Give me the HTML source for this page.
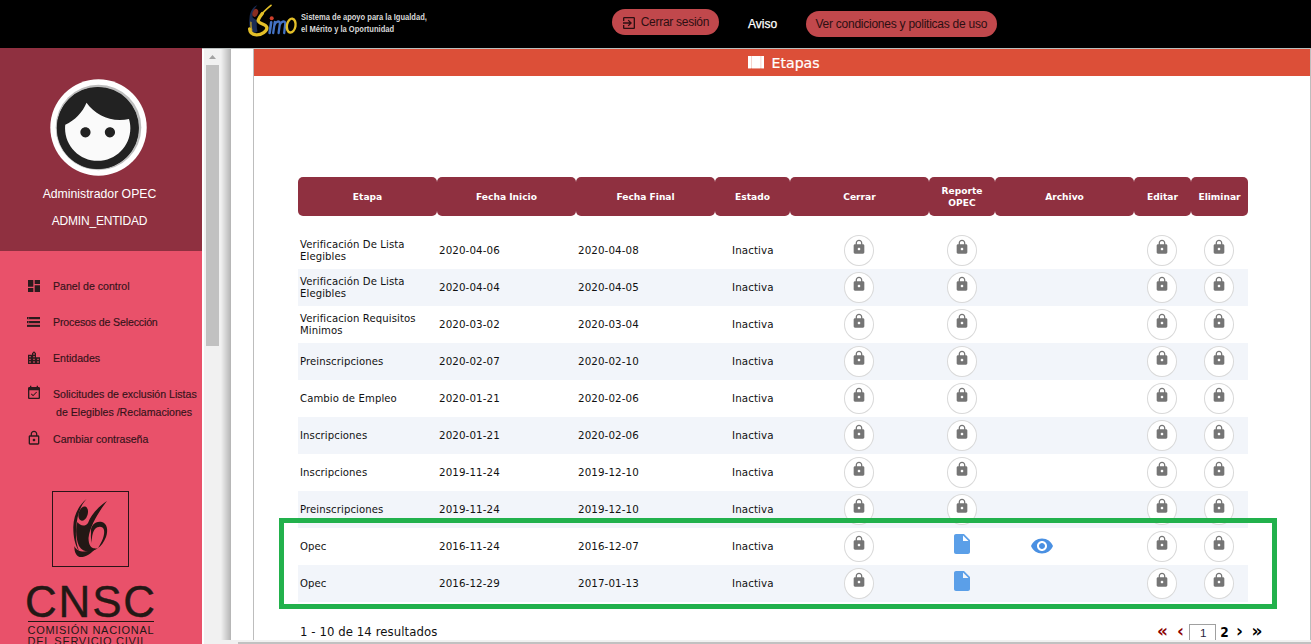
<!DOCTYPE html>
<html lang="es">
<head>
<meta charset="utf-8">
<title>SIMO - Etapas</title>
<style>
*{box-sizing:border-box;margin:0;padding:0}
html,body{width:1311px;height:644px;overflow:hidden;background:#fff}
body{position:relative;font-family:"DejaVu Sans","Liberation Sans",sans-serif;color:#111}
.abs{position:absolute}
/* top bar */
#top{left:0;top:0;width:1311px;height:48px;background:#000}
#topline{left:202px;top:48px;width:1109px;height:1px;background:#b9bebe}
.slogan{left:300.5px;top:12.1px;color:#d8d8d8;font-family:"Liberation Sans",sans-serif;font-weight:bold;font-size:8.8px;line-height:11.5px;white-space:nowrap;transform:scaleX(.858);transform-origin:0 0}
.pill{background:#c1484c;border-radius:13px;color:#2d0f12;font-family:"Liberation Sans",sans-serif;font-size:12px;white-space:nowrap}
#btn1{left:612px;top:9px;width:107px;height:26px}
#btn1 span{position:absolute;left:28.7px;top:6px;font-size:12px;letter-spacing:-.28px}
#btn2{left:806px;top:11px;width:191px;height:26px}
#btn2 span{position:absolute;left:9.5px;top:6px;font-size:12px;letter-spacing:-.25px}
#aviso{left:748px;top:17px;-webkit-text-stroke:.25px #fff;color:#fff;font-family:"Liberation Sans",sans-serif;font-size:12px}
/* sidebar */
#sbtop{left:0;top:48px;width:202px;height:203px;background:#8f3040}
#sbbot{left:0;top:251px;width:202px;height:393px;background:#e9516a}
.uname{left:0;width:199px;text-align:center;color:#fff;font-family:"Liberation Sans",sans-serif;white-space:nowrap}
.mi{left:53px;margin-top:-.4px;-webkit-text-stroke:.15px #3a1018;color:#33141a;font-family:"Liberation Sans",sans-serif;font-size:10.6px;white-space:nowrap}
/* scrollbars */
#vtrack{left:204px;top:49px;width:17px;height:591px;background:#f1f1f1}
#vthumb{left:206px;top:65px;width:13px;height:281px;background:#c1c1c1}
#vshadow{left:221px;top:49px;width:10px;height:591px;background:linear-gradient(to right,#f0f0f0,#b4b4b4)}
#htrack{z-index:5;left:204px;top:640px;width:1107px;height:4px;background:#f1f1f1}
#hthumb{z-index:6;left:238px;top:642px;width:1073px;height:2px;background:#c1c1c1}
/* content */
#panelL{left:253px;top:49px;width:1px;height:591px;background:#bdbdbd}
#panelR{left:1310px;top:49px;width:1px;height:591px;background:#bdbdbd}
#obar{left:254px;top:49px;width:1056px;height:27px;background:#dc4f38}
#title{left:771.5px;top:55px;color:#fff;font-size:14.15px;-webkit-text-stroke:.2px #fff;white-space:nowrap}
/* table */
.th{top:177px;height:39px;background:#8f3040;border-radius:5px;color:#fff;font-weight:bold;font-size:9.1px;display:flex;align-items:center;justify-content:center;text-align:center;line-height:12px;padding-top:1px}
.row{left:298px;width:950px;height:37px}
.row.alt{background:#f2f5fa}
.c{position:absolute;top:0px;height:37px;display:flex;align-items:center;font-size:10.3px;letter-spacing:.1px;line-height:12px;white-space:nowrap}
.c1{left:2px;font-size:10.1px}.c2{left:141px;top:-1px}.c3{left:280px;top:-1px}.c4{left:434px;top:-1px}
.lk{position:absolute;top:3px;width:30px;height:31px;border-radius:50%;border:1px solid #d9d9d9;background:#fff}
.lk svg{position:absolute;left:6.4px;top:3px;width:16px;height:16px;fill:#757575}
.k1{left:546px}.k2{left:649px}.k4{left:849px}.k5{left:906px}
.fi{position:absolute;left:652px;top:4px;width:24px;height:24px;fill:#5b9fe8}
.ey{position:absolute;left:732px;top:6px;width:24px;height:24px;fill:#4a90e2}
#green{left:279px;top:518px;width:998px;height:91px;border:5px solid #22b14c}
#res{left:300px;top:623.5px;font-family:'DejaVu Sans Condensed','DejaVu Sans',sans-serif;font-size:13px;letter-spacing:.08px;white-space:nowrap}
.pgc{top:620.8px;font-weight:bold;font-size:17px;line-height:20px;white-space:nowrap}
</style>
</head>
<body>
<!-- TOP BAR -->
<div id="top" class="abs"></div>
<div id="topline" class="abs"></div>
<svg class="abs" style="left:244px;top:0" width="60" height="48" viewBox="244 0 60 48">
  <path d="M257.3 5.2 C253.5 6.5 250.3 11 249.6 17 C249 22 249.3 27.500 250.5 31.500 C252 33.500 255.500 33 257.500 31.500 C256.600 28 256.500 24 257 20.500 C255.500 19.500 253.800 18.500 252.600 17.500 C252.500 12.500 254.300 8 257.300 5.200Z" fill="#1b2c54"/>
  <path d="M250.300 21.500 C250 25 250.500 28.500 251.300 31 L252.600 30.500 C251.800 28 251.500 25 251.600 22Z" fill="#b8982a"/>
  <ellipse cx="255.3" cy="12.9" rx="2.7" ry="4.1" transform="rotate(20 255.3 12.9)" fill="#8a2d20"/>
  <path d="M271 5.300 C267 8.500 263.500 11.800 261.300 14.800" fill="none" stroke="#e3bf28" stroke-width="1.700" stroke-linecap="round"/><path d="M262.300 13.500 C260.500 15.800 259 18 258.300 19.800 C256.800 23.800 265.500 23.200 266.800 27.200 C267.800 31 261 35.100 256.300 34.800 C252.300 34.500 249.800 32 249.600 28.800" fill="none" stroke="#e3bf28" stroke-width="3.300" stroke-linecap="round"/>
  <circle cx="271.7" cy="18.3" r="2" fill="#cf3f2b"/>
  <path d="M271.200 22.200 L269.600 33" stroke="#4472c4" stroke-width="2.600" stroke-linecap="round" fill="none"/>
  <path d="M274.800 21.800 L273.200 33 M274.400 25.500 C275.500 21.300 279.800 20 279.900 23.500 L278.600 33 M279.600 25.500 C280.700 21.300 285.200 20 285.300 23.500 L284.200 33" stroke="#4472c4" stroke-width="2.300" stroke-linecap="round" stroke-linejoin="round" fill="none"/>
  <ellipse cx="291.2" cy="25.6" rx="4.300" ry="7" transform="rotate(10 291.2 25.6)" fill="none" stroke="#e3bf28" stroke-width="2.400"/>
</svg>
<div class="abs slogan">Sistema de apoyo para la Igualdad,<br>el Mérito y la Oportunidad</div>
<div id="btn1" class="abs pill">
  <svg class="abs" style="left:9px;top:5.800px" width="16" height="16" viewBox="0 0 24 24" fill="#2d0f12"><path d="M10.09 15.590L11.5 17l5-5-5-5-1.410 1.410L12.670 11H3v2h9.670l-2.580 2.590zM19 3H5c-1.110 0-2 .9-2 2v4h2V5h14v14H5v-4H3v4c0 1.100.89 2 2 2h14c1.100 0 2-.9 2-2V5c0-1.100-.9-2-2-2z"/></svg>
  <span>Cerrar sesión</span>
</div>
<div id="aviso" class="abs">Aviso</div>
<div id="btn2" class="abs pill"><span>Ver condiciones y politicas de uso</span></div>

<!-- SIDEBAR -->
<div id="sbtop" class="abs"></div>
<div id="sbbot" class="abs"></div>
<svg class="abs" style="left:50px;top:79px" width="97" height="97" viewBox="-48.5 -48.5 97 97">
  <circle r="48.2" fill="#fff"/>
  <circle r="42.8" fill="#bdbdbd"/>
  <circle cx="-.6" cy=".5" r="41" fill="#222"/>
  <g transform="translate(-.8 .7) scale(4.08) translate(-12 -12)">
    <circle cx="12" cy="12" r="8.4" fill="#fafafa"/>
    <path fill="#222" d="M9 11.750c-.69 0-1.250.56-1.250 1.250s.56 1.250 1.250 1.250 1.250-.56 1.250-1.250-.56-1.250-1.250-1.250zm6 0c-.69 0-1.250.56-1.250 1.250s.56 1.250 1.250 1.250 1.250-.56 1.250-1.250-.56-1.250-1.250-1.250zM12 2C6.480 2 2 6.480 2 12s4.480 10 10 10 10-4.480 10-10S17.520 2 12 2zm0 18c-4.410 0-8-3.590-8-8 0-.29.020-.58.050-.86 2.360-1.050 4.230-2.980 5.210-5.370C11.070 8.330 14.050 10 17.420 10c.78 0 1.530-.09 2.250-.260.210.71.330 1.470.330 2.260 0 4.410-3.590 8-8 8z"/>
  </g>
</svg>
<div class="abs uname" style="top:186.5px;font-size:12.25px">Administrador OPEC</div>
<div class="abs uname" style="top:214px;font-size:12px;letter-spacing:-.2px">ADMIN_ENTIDAD</div>

<svg class="abs" style="left:25.500px;top:278px" width="16" height="16" viewBox="0 0 24 24" fill="#2a1a1c"><path d="M3 13h8V3H3v10zm0 8h8v-6H3v6zm10 0h8V11h-8v10zm0-18v6h8V3h-8z"/></svg>
<div class="abs mi" style="top:280px">Panel de control</div>
<svg class="abs" style="left:26.800px;top:317px" width="13.200" height="10" viewBox="0 0 13.2 10" fill="#2a1a1c"><rect x="0" y="0" width="13.200" height="2.200"/><rect x="0" y="4" width="13.200" height="2.200"/><rect x="0" y="7.800" width="13.200" height="2.100"/><circle cx="1.700" cy="1.100" r=".55" fill="#e9516a"/><circle cx="1.700" cy="5.100" r=".55" fill="#e9516a"/></svg>
<div class="abs mi" style="top:316px;letter-spacing:-.15px">Procesos de Selección</div>
<svg class="abs" style="left:25.500px;top:350px" width="16" height="16" viewBox="0 0 24 24" fill="#2a1a1c"><path d="M15 11V5l-3-3-3 3v2H3v14h18V11h-6zm-8 8H5v-2h2v2zm0-4H5v-2h2v2zm0-4H5V9h2v2zm6 8h-2v-2h2v2zm0-4h-2v-2h2v2zm0-4h-2V9h2v2zm0-4h-2V5h2v2zm6 12h-2v-2h2v2zm0-4h-2v-2h2v2z"/></svg>
<div class="abs mi" style="top:352px">Entidades</div>
<svg class="abs" style="left:25.500px;top:385px" width="16" height="16" viewBox="0 0 24 24" fill="#2a1a1c"><path d="M16.530 11.060L15.470 10l-4.880 4.880-2.120-2.120-1.060 1.060L10.590 17l5.940-5.940zM19 3h-1V1h-2v2H8V1H6v2H5c-1.110 0-1.990.9-1.990 2L3 19c0 1.100.89 2 2 2h14c1.100 0 2-.9 2-2V5c0-1.100-.9-2-2-2zm0 16H5V8h14v11z"/></svg>
<div class="abs mi" style="top:388px">Solicitudes de exclusión Listas</div>
<div class="abs mi" style="top:406px;left:56px">de Elegibles /Reclamaciones</div>
<svg class="abs" style="left:25.500px;top:430px" width="16" height="16" viewBox="0 0 24 24" fill="#2a1a1c"><path d="M12 17c1.100 0 2-.9 2-2s-.9-2-2-2-2 .9-2 2 .9 2 2 2zm6-9h-1V6c0-2.760-2.240-5-5-5S7 3.240 7 6v2H6c-1.100 0-2 .9-2 2v10c0 1.100.9 2 2 2h12c1.100 0 2-.9 2-2V10c0-1.100-.9-2-2-2zM8.900 6c0-1.710 1.390-3.100 3.100-3.100s3.100 1.390 3.100 3.100v2H8.900V6zM18 20H6V10h12v10z"/></svg>
<div class="abs mi" style="top:433px">Cambiar contraseña</div>

<!-- CNSC logo -->
<div class="abs" style="left:52px;top:491px;width:77px;height:76px;border:1px solid #2a1418"></div>
<svg class="abs" style="left:52px;top:491px" width="77" height="76" viewBox="52 491 77 76" fill="#231815">
  <ellipse cx="83.2" cy="513.6" rx="4.500" ry="7.300" transform="rotate(17 83.2 513.6)"/>
  <path d="M86.500 499 C79 505 73.500 515 73.300 527 C73.200 537 75 545 79 551 C76 543 75.500 536 76.200 528 C77 516 80 506 86.500 499Z"/>
  <path d="M107 501 C98 507 91 515 88 523 C85 527 80 526 77.500 522 C75.500 528 75.500 538 79 546 C83 553 92 553 98 548 C92 550 88.500 546 88.500 538 C90 525 100 510 107 501Z"/>
  <path d="M74.500 546 C76 552 86 553.500 95 548.500 C91 555 82 558.500 78.500 556.500 C75.500 555 74 550 74.500 546Z"/>
  <path d="M91 533 C90 525 96 520.500 102 522 C107 523.500 108.500 530 106 537 C104 542 101 546 98 548 C102 542 105 535 104 530 C103 526 98 526 95 529 C92.500 532 91.500 538 92 543 C91 540 90.700 536 91 533Z"/>
</svg>
<div class="abs" style="left:25px;top:577px;font-family:'Liberation Sans',sans-serif;font-size:44px;letter-spacing:1.8px;color:#231815;white-space:nowrap;line-height:50px;-webkit-text-stroke:.4px #231815">CNSC</div>
<div class="abs" style="left:28px;top:621px;width:126px;height:1px;background:#231815"></div>
<div class="abs" style="left:27.500px;top:624.5px;font-family:'Liberation Sans',sans-serif;font-size:11px;color:#231815;white-space:nowrap;line-height:11.6px;letter-spacing:.7px">COMISIÓN NACIONAL<br>DEL SERVICIO CIVIL</div>

<!-- SCROLLBARS -->
<div id="vtrack" class="abs"></div>
<div id="vthumb" class="abs"></div>
<svg class="abs" style="left:209px;top:55px" width="7" height="4" viewBox="0 0 7 4"><path d="M0 4L3.500 0 7 4z" fill="#a3a3a3"/></svg>
<div id="vshadow" class="abs"></div>
<div id="htrack" class="abs"></div>
<div id="hthumb" class="abs"></div>

<!-- CONTENT PANEL -->
<div id="panelL" class="abs"></div>
<div id="panelR" class="abs"></div>
<div id="obar" class="abs"></div>
<svg class="abs" style="left:748px;top:56.3px" width="16.4" height="12.3" viewBox="0 0 16.4 12.3" fill="#fff"><rect x="0" y="0" width="16.4" height="12.3" fill="#f3c9c1"/><rect x="0" y="0" width="3" height="12.3"/><rect x="3.8" y="0" width="8.7" height="12.3"/><rect x="13.300" y="0" width="3.100" height="12.3"/></svg>
<div id="title" class="abs">Etapas</div>

<!-- TABLE HEADER -->
<div class="abs th" style="left:298px;width:139px">Etapa</div>
<div class="abs th" style="left:437px;width:139px">Fecha Inicio</div>
<div class="abs th" style="left:576px;width:139px">Fecha Final</div>
<div class="abs th" style="left:715px;width:75px">Estado</div>
<div class="abs th" style="left:790px;width:139px">Cerrar</div>
<div class="abs th" style="left:929px;width:66px">Reporte<br>OPEC</div>
<div class="abs th" style="left:995px;width:139px">Archivo</div>
<div class="abs th" style="left:1134px;width:57px">Editar</div>
<div class="abs th" style="left:1191px;width:57px">Eliminar</div>

<!-- ROWS -->
<div id="rows">
<div class="row abs" style="top:232px"><div class="c c1">Verificación De Lista<br>Elegibles</div><div class="c c2">2020-04-06</div><div class="c c3">2020-04-08</div><div class="c c4">Inactiva</div><div class="lk k1"><svg viewBox="0 0 24 24"><path d="M18 8h-1V6c0-2.760-2.240-5-5-5S7 3.240 7 6v2H6c-1.100 0-2 .9-2 2v10c0 1.100.9 2 2 2h12c1.100 0 2-.9 2-2V10c0-1.100-.9-2-2-2zm-6 9c-1.100 0-2-.9-2-2s.9-2 2-2 2 .9 2 2-.9 2-2 2zm3.100-9H8.900V6c0-1.710 1.390-3.100 3.100-3.100 1.710 0 3.100 1.390 3.100 3.100v2z"/></svg></div><div class="lk k2"><svg viewBox="0 0 24 24"><path d="M18 8h-1V6c0-2.760-2.240-5-5-5S7 3.240 7 6v2H6c-1.100 0-2 .9-2 2v10c0 1.100.9 2 2 2h12c1.100 0 2-.9 2-2V10c0-1.100-.9-2-2-2zm-6 9c-1.100 0-2-.9-2-2s.9-2 2-2 2 .9 2 2-.9 2-2 2zm3.100-9H8.900V6c0-1.710 1.390-3.100 3.100-3.100 1.710 0 3.100 1.390 3.100 3.100v2z"/></svg></div><div class="lk k4"><svg viewBox="0 0 24 24"><path d="M18 8h-1V6c0-2.760-2.240-5-5-5S7 3.240 7 6v2H6c-1.100 0-2 .9-2 2v10c0 1.100.9 2 2 2h12c1.100 0 2-.9 2-2V10c0-1.100-.9-2-2-2zm-6 9c-1.100 0-2-.9-2-2s.9-2 2-2 2 .9 2 2-.9 2-2 2zm3.100-9H8.900V6c0-1.710 1.390-3.100 3.100-3.100 1.710 0 3.100 1.390 3.100 3.100v2z"/></svg></div><div class="lk k5"><svg viewBox="0 0 24 24"><path d="M18 8h-1V6c0-2.760-2.240-5-5-5S7 3.240 7 6v2H6c-1.100 0-2 .9-2 2v10c0 1.100.9 2 2 2h12c1.100 0 2-.9 2-2V10c0-1.100-.9-2-2-2zm-6 9c-1.100 0-2-.9-2-2s.9-2 2-2 2 .9 2 2-.9 2-2 2zm3.100-9H8.900V6c0-1.710 1.390-3.100 3.100-3.100 1.710 0 3.100 1.390 3.100 3.100v2z"/></svg></div></div>
<div class="row abs alt" style="top:269px"><div class="c c1">Verificación De Lista<br>Elegibles</div><div class="c c2">2020-04-04</div><div class="c c3">2020-04-05</div><div class="c c4">Inactiva</div><div class="lk k1"><svg viewBox="0 0 24 24"><path d="M18 8h-1V6c0-2.760-2.240-5-5-5S7 3.240 7 6v2H6c-1.100 0-2 .9-2 2v10c0 1.100.9 2 2 2h12c1.100 0 2-.9 2-2V10c0-1.100-.9-2-2-2zm-6 9c-1.100 0-2-.9-2-2s.9-2 2-2 2 .9 2 2-.9 2-2 2zm3.100-9H8.900V6c0-1.710 1.390-3.100 3.100-3.100 1.710 0 3.100 1.390 3.100 3.100v2z"/></svg></div><div class="lk k2"><svg viewBox="0 0 24 24"><path d="M18 8h-1V6c0-2.760-2.240-5-5-5S7 3.240 7 6v2H6c-1.100 0-2 .9-2 2v10c0 1.100.9 2 2 2h12c1.100 0 2-.9 2-2V10c0-1.100-.9-2-2-2zm-6 9c-1.100 0-2-.9-2-2s.9-2 2-2 2 .9 2 2-.9 2-2 2zm3.100-9H8.900V6c0-1.710 1.390-3.100 3.100-3.100 1.710 0 3.100 1.390 3.100 3.100v2z"/></svg></div><div class="lk k4"><svg viewBox="0 0 24 24"><path d="M18 8h-1V6c0-2.760-2.240-5-5-5S7 3.240 7 6v2H6c-1.100 0-2 .9-2 2v10c0 1.100.9 2 2 2h12c1.100 0 2-.9 2-2V10c0-1.100-.9-2-2-2zm-6 9c-1.100 0-2-.9-2-2s.9-2 2-2 2 .9 2 2-.9 2-2 2zm3.100-9H8.900V6c0-1.710 1.390-3.100 3.100-3.100 1.710 0 3.100 1.390 3.100 3.100v2z"/></svg></div><div class="lk k5"><svg viewBox="0 0 24 24"><path d="M18 8h-1V6c0-2.760-2.240-5-5-5S7 3.240 7 6v2H6c-1.100 0-2 .9-2 2v10c0 1.100.9 2 2 2h12c1.100 0 2-.9 2-2V10c0-1.100-.9-2-2-2zm-6 9c-1.100 0-2-.9-2-2s.9-2 2-2 2 .9 2 2-.9 2-2 2zm3.100-9H8.900V6c0-1.710 1.390-3.100 3.100-3.100 1.710 0 3.100 1.390 3.100 3.100v2z"/></svg></div></div>
<div class="row abs" style="top:306px"><div class="c c1">Verificacion Requisitos<br>Minimos</div><div class="c c2">2020-03-02</div><div class="c c3">2020-03-04</div><div class="c c4">Inactiva</div><div class="lk k1"><svg viewBox="0 0 24 24"><path d="M18 8h-1V6c0-2.760-2.240-5-5-5S7 3.240 7 6v2H6c-1.100 0-2 .9-2 2v10c0 1.100.9 2 2 2h12c1.100 0 2-.9 2-2V10c0-1.100-.9-2-2-2zm-6 9c-1.100 0-2-.9-2-2s.9-2 2-2 2 .9 2 2-.9 2-2 2zm3.100-9H8.900V6c0-1.710 1.390-3.100 3.100-3.100 1.710 0 3.100 1.390 3.100 3.100v2z"/></svg></div><div class="lk k2"><svg viewBox="0 0 24 24"><path d="M18 8h-1V6c0-2.760-2.240-5-5-5S7 3.240 7 6v2H6c-1.100 0-2 .9-2 2v10c0 1.100.9 2 2 2h12c1.100 0 2-.9 2-2V10c0-1.100-.9-2-2-2zm-6 9c-1.100 0-2-.9-2-2s.9-2 2-2 2 .9 2 2-.9 2-2 2zm3.100-9H8.900V6c0-1.710 1.390-3.100 3.100-3.100 1.710 0 3.100 1.390 3.100 3.100v2z"/></svg></div><div class="lk k4"><svg viewBox="0 0 24 24"><path d="M18 8h-1V6c0-2.760-2.240-5-5-5S7 3.240 7 6v2H6c-1.100 0-2 .9-2 2v10c0 1.100.9 2 2 2h12c1.100 0 2-.9 2-2V10c0-1.100-.9-2-2-2zm-6 9c-1.100 0-2-.9-2-2s.9-2 2-2 2 .9 2 2-.9 2-2 2zm3.100-9H8.900V6c0-1.710 1.390-3.100 3.100-3.100 1.710 0 3.100 1.390 3.100 3.100v2z"/></svg></div><div class="lk k5"><svg viewBox="0 0 24 24"><path d="M18 8h-1V6c0-2.760-2.240-5-5-5S7 3.240 7 6v2H6c-1.100 0-2 .9-2 2v10c0 1.100.9 2 2 2h12c1.100 0 2-.9 2-2V10c0-1.100-.9-2-2-2zm-6 9c-1.100 0-2-.9-2-2s.9-2 2-2 2 .9 2 2-.9 2-2 2zm3.100-9H8.900V6c0-1.710 1.390-3.100 3.100-3.100 1.710 0 3.100 1.390 3.100 3.100v2z"/></svg></div></div>
<div class="row abs alt" style="top:343px"><div class="c c1">Preinscripciones</div><div class="c c2">2020-02-07</div><div class="c c3">2020-02-10</div><div class="c c4">Inactiva</div><div class="lk k1"><svg viewBox="0 0 24 24"><path d="M18 8h-1V6c0-2.760-2.240-5-5-5S7 3.240 7 6v2H6c-1.100 0-2 .9-2 2v10c0 1.100.9 2 2 2h12c1.100 0 2-.9 2-2V10c0-1.100-.9-2-2-2zm-6 9c-1.100 0-2-.9-2-2s.9-2 2-2 2 .9 2 2-.9 2-2 2zm3.100-9H8.900V6c0-1.710 1.390-3.100 3.100-3.100 1.710 0 3.100 1.390 3.100 3.100v2z"/></svg></div><div class="lk k2"><svg viewBox="0 0 24 24"><path d="M18 8h-1V6c0-2.760-2.240-5-5-5S7 3.240 7 6v2H6c-1.100 0-2 .9-2 2v10c0 1.100.9 2 2 2h12c1.100 0 2-.9 2-2V10c0-1.100-.9-2-2-2zm-6 9c-1.100 0-2-.9-2-2s.9-2 2-2 2 .9 2 2-.9 2-2 2zm3.100-9H8.900V6c0-1.710 1.390-3.100 3.100-3.100 1.710 0 3.100 1.390 3.100 3.100v2z"/></svg></div><div class="lk k4"><svg viewBox="0 0 24 24"><path d="M18 8h-1V6c0-2.760-2.240-5-5-5S7 3.240 7 6v2H6c-1.100 0-2 .9-2 2v10c0 1.100.9 2 2 2h12c1.100 0 2-.9 2-2V10c0-1.100-.9-2-2-2zm-6 9c-1.100 0-2-.9-2-2s.9-2 2-2 2 .9 2 2-.9 2-2 2zm3.100-9H8.900V6c0-1.710 1.390-3.100 3.100-3.100 1.710 0 3.100 1.390 3.100 3.100v2z"/></svg></div><div class="lk k5"><svg viewBox="0 0 24 24"><path d="M18 8h-1V6c0-2.760-2.240-5-5-5S7 3.240 7 6v2H6c-1.100 0-2 .9-2 2v10c0 1.100.9 2 2 2h12c1.100 0 2-.9 2-2V10c0-1.100-.9-2-2-2zm-6 9c-1.100 0-2-.9-2-2s.9-2 2-2 2 .9 2 2-.9 2-2 2zm3.100-9H8.900V6c0-1.710 1.390-3.100 3.100-3.100 1.710 0 3.100 1.390 3.100 3.100v2z"/></svg></div></div>
<div class="row abs" style="top:380px"><div class="c c1">Cambio de Empleo</div><div class="c c2">2020-01-21</div><div class="c c3">2020-02-06</div><div class="c c4">Inactiva</div><div class="lk k1"><svg viewBox="0 0 24 24"><path d="M18 8h-1V6c0-2.760-2.240-5-5-5S7 3.240 7 6v2H6c-1.100 0-2 .9-2 2v10c0 1.100.9 2 2 2h12c1.100 0 2-.9 2-2V10c0-1.100-.9-2-2-2zm-6 9c-1.100 0-2-.9-2-2s.9-2 2-2 2 .9 2 2-.9 2-2 2zm3.100-9H8.900V6c0-1.710 1.390-3.100 3.100-3.100 1.710 0 3.100 1.390 3.100 3.100v2z"/></svg></div><div class="lk k2"><svg viewBox="0 0 24 24"><path d="M18 8h-1V6c0-2.760-2.240-5-5-5S7 3.240 7 6v2H6c-1.100 0-2 .9-2 2v10c0 1.100.9 2 2 2h12c1.100 0 2-.9 2-2V10c0-1.100-.9-2-2-2zm-6 9c-1.100 0-2-.9-2-2s.9-2 2-2 2 .9 2 2-.9 2-2 2zm3.100-9H8.900V6c0-1.710 1.390-3.100 3.100-3.100 1.710 0 3.100 1.390 3.100 3.100v2z"/></svg></div><div class="lk k4"><svg viewBox="0 0 24 24"><path d="M18 8h-1V6c0-2.760-2.240-5-5-5S7 3.240 7 6v2H6c-1.100 0-2 .9-2 2v10c0 1.100.9 2 2 2h12c1.100 0 2-.9 2-2V10c0-1.100-.9-2-2-2zm-6 9c-1.100 0-2-.9-2-2s.9-2 2-2 2 .9 2 2-.9 2-2 2zm3.100-9H8.900V6c0-1.710 1.390-3.100 3.100-3.100 1.710 0 3.100 1.390 3.100 3.100v2z"/></svg></div><div class="lk k5"><svg viewBox="0 0 24 24"><path d="M18 8h-1V6c0-2.760-2.240-5-5-5S7 3.240 7 6v2H6c-1.100 0-2 .9-2 2v10c0 1.100.9 2 2 2h12c1.100 0 2-.9 2-2V10c0-1.100-.9-2-2-2zm-6 9c-1.100 0-2-.9-2-2s.9-2 2-2 2 .9 2 2-.9 2-2 2zm3.100-9H8.900V6c0-1.710 1.390-3.100 3.100-3.100 1.710 0 3.100 1.390 3.100 3.100v2z"/></svg></div></div>
<div class="row abs alt" style="top:417px"><div class="c c1">Inscripciones</div><div class="c c2">2020-01-21</div><div class="c c3">2020-02-06</div><div class="c c4">Inactiva</div><div class="lk k1"><svg viewBox="0 0 24 24"><path d="M18 8h-1V6c0-2.760-2.240-5-5-5S7 3.240 7 6v2H6c-1.100 0-2 .9-2 2v10c0 1.100.9 2 2 2h12c1.100 0 2-.9 2-2V10c0-1.100-.9-2-2-2zm-6 9c-1.100 0-2-.9-2-2s.9-2 2-2 2 .9 2 2-.9 2-2 2zm3.100-9H8.900V6c0-1.710 1.390-3.100 3.100-3.100 1.710 0 3.100 1.390 3.100 3.100v2z"/></svg></div><div class="lk k2"><svg viewBox="0 0 24 24"><path d="M18 8h-1V6c0-2.760-2.240-5-5-5S7 3.240 7 6v2H6c-1.100 0-2 .9-2 2v10c0 1.100.9 2 2 2h12c1.100 0 2-.9 2-2V10c0-1.100-.9-2-2-2zm-6 9c-1.100 0-2-.9-2-2s.9-2 2-2 2 .9 2 2-.9 2-2 2zm3.100-9H8.900V6c0-1.710 1.390-3.100 3.100-3.100 1.710 0 3.100 1.390 3.100 3.100v2z"/></svg></div><div class="lk k4"><svg viewBox="0 0 24 24"><path d="M18 8h-1V6c0-2.760-2.240-5-5-5S7 3.240 7 6v2H6c-1.100 0-2 .9-2 2v10c0 1.100.9 2 2 2h12c1.100 0 2-.9 2-2V10c0-1.100-.9-2-2-2zm-6 9c-1.100 0-2-.9-2-2s.9-2 2-2 2 .9 2 2-.9 2-2 2zm3.100-9H8.900V6c0-1.710 1.390-3.100 3.100-3.100 1.710 0 3.100 1.390 3.100 3.100v2z"/></svg></div><div class="lk k5"><svg viewBox="0 0 24 24"><path d="M18 8h-1V6c0-2.760-2.240-5-5-5S7 3.240 7 6v2H6c-1.100 0-2 .9-2 2v10c0 1.100.9 2 2 2h12c1.100 0 2-.9 2-2V10c0-1.100-.9-2-2-2zm-6 9c-1.100 0-2-.9-2-2s.9-2 2-2 2 .9 2 2-.9 2-2 2zm3.100-9H8.900V6c0-1.710 1.390-3.100 3.100-3.100 1.710 0 3.100 1.390 3.100 3.100v2z"/></svg></div></div>
<div class="row abs" style="top:454px"><div class="c c1">Inscripciones</div><div class="c c2">2019-11-24</div><div class="c c3">2019-12-10</div><div class="c c4">Inactiva</div><div class="lk k1"><svg viewBox="0 0 24 24"><path d="M18 8h-1V6c0-2.760-2.240-5-5-5S7 3.240 7 6v2H6c-1.100 0-2 .9-2 2v10c0 1.100.9 2 2 2h12c1.100 0 2-.9 2-2V10c0-1.100-.9-2-2-2zm-6 9c-1.100 0-2-.9-2-2s.9-2 2-2 2 .9 2 2-.9 2-2 2zm3.100-9H8.900V6c0-1.710 1.390-3.100 3.100-3.100 1.710 0 3.100 1.390 3.100 3.100v2z"/></svg></div><div class="lk k2"><svg viewBox="0 0 24 24"><path d="M18 8h-1V6c0-2.760-2.240-5-5-5S7 3.240 7 6v2H6c-1.100 0-2 .9-2 2v10c0 1.100.9 2 2 2h12c1.100 0 2-.9 2-2V10c0-1.100-.9-2-2-2zm-6 9c-1.100 0-2-.9-2-2s.9-2 2-2 2 .9 2 2-.9 2-2 2zm3.100-9H8.900V6c0-1.710 1.390-3.100 3.100-3.100 1.710 0 3.100 1.390 3.100 3.100v2z"/></svg></div><div class="lk k4"><svg viewBox="0 0 24 24"><path d="M18 8h-1V6c0-2.760-2.240-5-5-5S7 3.240 7 6v2H6c-1.100 0-2 .9-2 2v10c0 1.100.9 2 2 2h12c1.100 0 2-.9 2-2V10c0-1.100-.9-2-2-2zm-6 9c-1.100 0-2-.9-2-2s.9-2 2-2 2 .9 2 2-.9 2-2 2zm3.100-9H8.900V6c0-1.710 1.390-3.100 3.100-3.100 1.710 0 3.100 1.390 3.100 3.100v2z"/></svg></div><div class="lk k5"><svg viewBox="0 0 24 24"><path d="M18 8h-1V6c0-2.760-2.240-5-5-5S7 3.240 7 6v2H6c-1.100 0-2 .9-2 2v10c0 1.100.9 2 2 2h12c1.100 0 2-.9 2-2V10c0-1.100-.9-2-2-2zm-6 9c-1.100 0-2-.9-2-2s.9-2 2-2 2 .9 2 2-.9 2-2 2zm3.100-9H8.900V6c0-1.710 1.390-3.100 3.100-3.100 1.710 0 3.100 1.390 3.100 3.100v2z"/></svg></div></div>
<div class="row abs alt" style="top:491px"><div class="c c1">Preinscripciones</div><div class="c c2">2019-11-24</div><div class="c c3">2019-12-10</div><div class="c c4">Inactiva</div><div class="lk k1"><svg viewBox="0 0 24 24"><path d="M18 8h-1V6c0-2.760-2.240-5-5-5S7 3.240 7 6v2H6c-1.100 0-2 .9-2 2v10c0 1.100.9 2 2 2h12c1.100 0 2-.9 2-2V10c0-1.100-.9-2-2-2zm-6 9c-1.100 0-2-.9-2-2s.9-2 2-2 2 .9 2 2-.9 2-2 2zm3.100-9H8.900V6c0-1.710 1.390-3.100 3.100-3.100 1.710 0 3.100 1.390 3.100 3.100v2z"/></svg></div><div class="lk k2"><svg viewBox="0 0 24 24"><path d="M18 8h-1V6c0-2.760-2.240-5-5-5S7 3.240 7 6v2H6c-1.100 0-2 .9-2 2v10c0 1.100.9 2 2 2h12c1.100 0 2-.9 2-2V10c0-1.100-.9-2-2-2zm-6 9c-1.100 0-2-.9-2-2s.9-2 2-2 2 .9 2 2-.9 2-2 2zm3.100-9H8.900V6c0-1.710 1.390-3.100 3.100-3.100 1.710 0 3.100 1.390 3.100 3.100v2z"/></svg></div><div class="lk k4"><svg viewBox="0 0 24 24"><path d="M18 8h-1V6c0-2.760-2.240-5-5-5S7 3.240 7 6v2H6c-1.100 0-2 .9-2 2v10c0 1.100.9 2 2 2h12c1.100 0 2-.9 2-2V10c0-1.100-.9-2-2-2zm-6 9c-1.100 0-2-.9-2-2s.9-2 2-2 2 .9 2 2-.9 2-2 2zm3.100-9H8.900V6c0-1.710 1.390-3.100 3.100-3.100 1.710 0 3.100 1.390 3.100 3.100v2z"/></svg></div><div class="lk k5"><svg viewBox="0 0 24 24"><path d="M18 8h-1V6c0-2.760-2.240-5-5-5S7 3.240 7 6v2H6c-1.100 0-2 .9-2 2v10c0 1.100.9 2 2 2h12c1.100 0 2-.9 2-2V10c0-1.100-.9-2-2-2zm-6 9c-1.100 0-2-.9-2-2s.9-2 2-2 2 .9 2 2-.9 2-2 2zm3.100-9H8.900V6c0-1.710 1.390-3.100 3.100-3.100 1.710 0 3.100 1.390 3.100 3.100v2z"/></svg></div></div>
<div class="row abs" style="top:528px"><div class="c c1">Opec</div><div class="c c2">2016-11-24</div><div class="c c3">2016-12-07</div><div class="c c4">Inactiva</div><div class="lk k1"><svg viewBox="0 0 24 24"><path d="M18 8h-1V6c0-2.760-2.240-5-5-5S7 3.240 7 6v2H6c-1.100 0-2 .9-2 2v10c0 1.100.9 2 2 2h12c1.100 0 2-.9 2-2V10c0-1.100-.9-2-2-2zm-6 9c-1.100 0-2-.9-2-2s.9-2 2-2 2 .9 2 2-.9 2-2 2zm3.100-9H8.900V6c0-1.710 1.390-3.100 3.100-3.100 1.710 0 3.100 1.390 3.100 3.100v2z"/></svg></div><svg class="fi" viewBox="0 0 24 24"><path d="M6 2c-1.100 0-1.990.9-1.990 2L4 20c0 1.100.89 2 1.990 2H18c1.100 0 2-.9 2-2V8l-6-6H6zm7 7V3.500L18.500 9H13z"/></svg><svg class="ey" viewBox="0 0 24 24"><path d="M12 4.500C7 4.500 2.730 7.610 1 12c1.730 4.390 6 7.500 11 7.500s9.270-3.110 11-7.500c-1.730-4.390-6-7.500-11-7.500zM12 17c-2.760 0-5-2.240-5-5s2.240-5 5-5 5 2.240 5 5-2.240 5-5 5zm0-8c-1.660 0-3 1.340-3 3s1.340 3 3 3 3-1.340 3-3-1.340-3-3-3z"/></svg><div class="lk k4"><svg viewBox="0 0 24 24"><path d="M18 8h-1V6c0-2.760-2.240-5-5-5S7 3.240 7 6v2H6c-1.100 0-2 .9-2 2v10c0 1.100.9 2 2 2h12c1.100 0 2-.9 2-2V10c0-1.100-.9-2-2-2zm-6 9c-1.100 0-2-.9-2-2s.9-2 2-2 2 .9 2 2-.9 2-2 2zm3.100-9H8.900V6c0-1.710 1.390-3.100 3.100-3.100 1.710 0 3.100 1.390 3.100 3.100v2z"/></svg></div><div class="lk k5"><svg viewBox="0 0 24 24"><path d="M18 8h-1V6c0-2.760-2.240-5-5-5S7 3.240 7 6v2H6c-1.100 0-2 .9-2 2v10c0 1.100.9 2 2 2h12c1.100 0 2-.9 2-2V10c0-1.100-.9-2-2-2zm-6 9c-1.100 0-2-.9-2-2s.9-2 2-2 2 .9 2 2-.9 2-2 2zm3.100-9H8.900V6c0-1.710 1.390-3.100 3.100-3.100 1.710 0 3.100 1.390 3.100 3.100v2z"/></svg></div></div>
<div class="row abs alt" style="top:565px"><div class="c c1">Opec</div><div class="c c2">2016-12-29</div><div class="c c3">2017-01-13</div><div class="c c4">Inactiva</div><div class="lk k1"><svg viewBox="0 0 24 24"><path d="M18 8h-1V6c0-2.760-2.240-5-5-5S7 3.240 7 6v2H6c-1.100 0-2 .9-2 2v10c0 1.100.9 2 2 2h12c1.100 0 2-.9 2-2V10c0-1.100-.9-2-2-2zm-6 9c-1.100 0-2-.9-2-2s.9-2 2-2 2 .9 2 2-.9 2-2 2zm3.100-9H8.900V6c0-1.710 1.390-3.100 3.100-3.100 1.710 0 3.100 1.390 3.100 3.100v2z"/></svg></div><svg class="fi" viewBox="0 0 24 24"><path d="M6 2c-1.100 0-1.990.9-1.990 2L4 20c0 1.100.89 2 1.990 2H18c1.100 0 2-.9 2-2V8l-6-6H6zm7 7V3.500L18.500 9H13z"/></svg><div class="lk k4"><svg viewBox="0 0 24 24"><path d="M18 8h-1V6c0-2.760-2.240-5-5-5S7 3.240 7 6v2H6c-1.100 0-2 .9-2 2v10c0 1.100.9 2 2 2h12c1.100 0 2-.9 2-2V10c0-1.100-.9-2-2-2zm-6 9c-1.100 0-2-.9-2-2s.9-2 2-2 2 .9 2 2-.9 2-2 2zm3.100-9H8.900V6c0-1.710 1.390-3.100 3.100-3.100 1.710 0 3.100 1.390 3.100 3.100v2z"/></svg></div><div class="lk k5"><svg viewBox="0 0 24 24"><path d="M18 8h-1V6c0-2.760-2.240-5-5-5S7 3.240 7 6v2H6c-1.100 0-2 .9-2 2v10c0 1.100.9 2 2 2h12c1.100 0 2-.9 2-2V10c0-1.100-.9-2-2-2zm-6 9c-1.100 0-2-.9-2-2s.9-2 2-2 2 .9 2 2-.9 2-2 2zm3.100-9H8.900V6c0-1.710 1.390-3.100 3.100-3.100 1.710 0 3.100 1.390 3.100 3.100v2z"/></svg></div></div>
</div>

<div id="green" class="abs"></div>
<div id="res" class="abs">1 - 10 de 14 resultados</div>
<div class="abs pgc" style="left:1157px;color:#8b0000">«</div>
<div class="abs pgc" style="left:1177px;color:#8b0000">‹</div>
<div class="abs" style="left:1189px;top:624px;width:27px;height:20px;border:1px solid #a0a0a0;background:#fff"></div>
<div class="abs" style="left:1199.5px;top:626px;font-family:'Liberation Sans',sans-serif;font-size:23.4px;line-height:26px;transform:scale(.5);transform-origin:0 0;color:#2a2340">1</div>
<div class="abs" style="left:1220.3px;top:624px;font-family:'DejaVu Sans Condensed','DejaVu Sans',sans-serif;font-weight:bold;font-size:13.5px;color:#000">2</div>
<div class="abs pgc" style="left:1236px;color:#000">›</div>
<div class="abs pgc" style="left:1251.500px;color:#000">»</div>
</body>
</html>
